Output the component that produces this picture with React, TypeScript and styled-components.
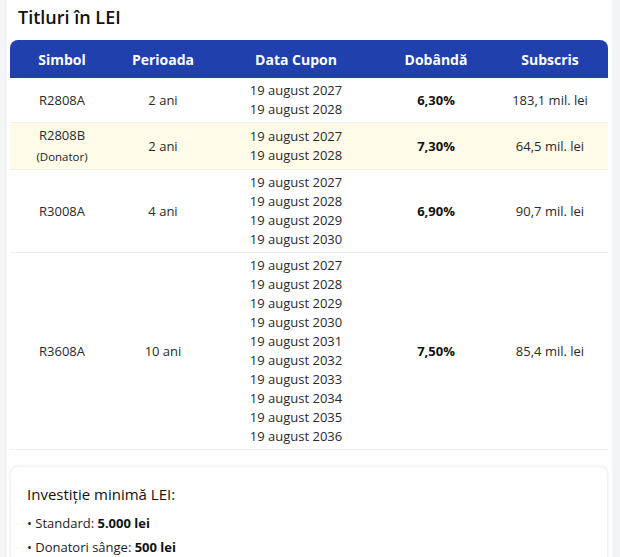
import React from "react";
import styled, { createGlobalStyle } from "styled-components";

const Global = createGlobalStyle`
  html, body { margin: 0; padding: 0; background: #f3f4f6; }
  body { font-family: "Open Sans", "Noto Sans", sans-serif; color: #222; }
`;

const Page = styled.div`
  margin: 0 8px 0 7px;
  background: #ffffff;
  padding: 4px 4px 0 3px;
  min-height: 557px;
  box-sizing: border-box;
`;

const Title = styled.h2`
  margin: 0 0 10px 8px;
  font-size: 18px;
  line-height: 26px;
  font-weight: 600;
  color: #111;
`;

const Table = styled.table`
  width: 598px;
  border-collapse: separate;
  border-spacing: 0;
  table-layout: fixed;
  font-size: 13px;
  color: #2a2a2a;
`;

const Th = styled.th<{ $w: number }>`
  width: ${(p) => p.$w}px;
  background: #1f40ad;
  color: #fff;
  font-size: 14px;
  font-weight: 700;
  height: 38px;
  padding: 0;
  text-align: center;
  &:first-child { border-top-left-radius: 8px; }
  &:last-child { border-top-right-radius: 8px; }
`;

const Tr = styled.tr<{ $hl?: boolean }>`
  background: ${(p) => (p.$hl ? "#fefbe9" : "#fff")};
`;

const Td = styled.td<{ $bold?: boolean }>`
  text-align: center;
  vertical-align: middle;
  padding: 3px 4px;
  line-height: 19px;
  border-bottom: 1px solid #eeeff1;
  font-weight: ${(p) => (p.$bold ? 700 : 400)};
  color: ${(p) => (p.$bold ? "#111" : "#2a2a2a")};
`;

const Note = styled.div`
  font-size: 11.5px;
  line-height: 19px;
  margin-top: 2px;
  color: #222;
`;

const DateLine = styled.div`
  line-height: 19px;
`;

const Card = styled.div`
  margin-top: 16px;
  width: 598px;
  box-sizing: border-box;
  border-radius: 8px;
  background: #fff;
  box-shadow: 0 0 3px rgba(0, 0, 0, 0.08);
  border: 1px solid #f1f2f4;
  padding: 16px 16px 14px;
`;

const CardTitle = styled.div`
  font-size: 15px;
  font-weight: 500;
  color: #111;
  line-height: 22px;
  margin-bottom: 6px;
`;

const Bullet = styled.div`
  font-size: 13px;
  line-height: 24px;
  color: #222;
  b { font-weight: 700; color: #111; }
`;

type Row = {
  sym: string;
  note?: string;
  per: string;
  years: number[];
  rate: string;
  sub: string;
  hl?: boolean;
};

const range = (a: number, b: number) =>
  Array.from({ length: b - a + 1 }, (_, i) => a + i);

const rows: Row[] = [
  { sym: "R2808A", per: "2 ani", years: range(2027, 2028), rate: "6,30%", sub: "183,1 mil. lei" },
  { sym: "R2808B", note: "(Donator)", per: "2 ani", years: range(2027, 2028), rate: "7,30%", sub: "64,5 mil. lei", hl: true },
  { sym: "R3008A", per: "4 ani", years: range(2027, 2030), rate: "6,90%", sub: "90,7 mil. lei" },
  { sym: "R3608A", per: "10 ani", years: range(2027, 2036), rate: "7,50%", sub: "85,4 mil. lei" },
];

const cols: [string, number][] = [
  ["Simbol", 104],
  ["Perioada", 98],
  ["Data Cupon", 168],
  ["Dobândă", 112],
  ["Subscris", 116],
];

export default function App() {
  return (
    <>
      <Global />
      <Page>
        <Title>Titluri în LEI</Title>
        <Table>
          <thead>
            <tr>
              {cols.map(([c, w]) => (
                <Th key={c} $w={w}>{c}</Th>
              ))}
            </tr>
          </thead>
          <tbody>
            {rows.map((r) => (
              <Tr key={r.sym} $hl={r.hl}>
                <Td>
                  {r.sym}
                  {r.note && <Note>{r.note}</Note>}
                </Td>
                <Td>{r.per}</Td>
                <Td>
                  {r.years.map((y) => (
                    <DateLine key={y}>19 august {y}</DateLine>
                  ))}
                </Td>
                <Td $bold>{r.rate}</Td>
                <Td>{r.sub}</Td>
              </Tr>
            ))}
          </tbody>
        </Table>
        <Card>
          <CardTitle>Investiție minimă LEI:</CardTitle>
          <Bullet>• Standard: <b>5.000 lei</b></Bullet>
          <Bullet>• Donatori sânge: <b>500 lei</b></Bullet>
        </Card>
      </Page>
    </>
  );
}
